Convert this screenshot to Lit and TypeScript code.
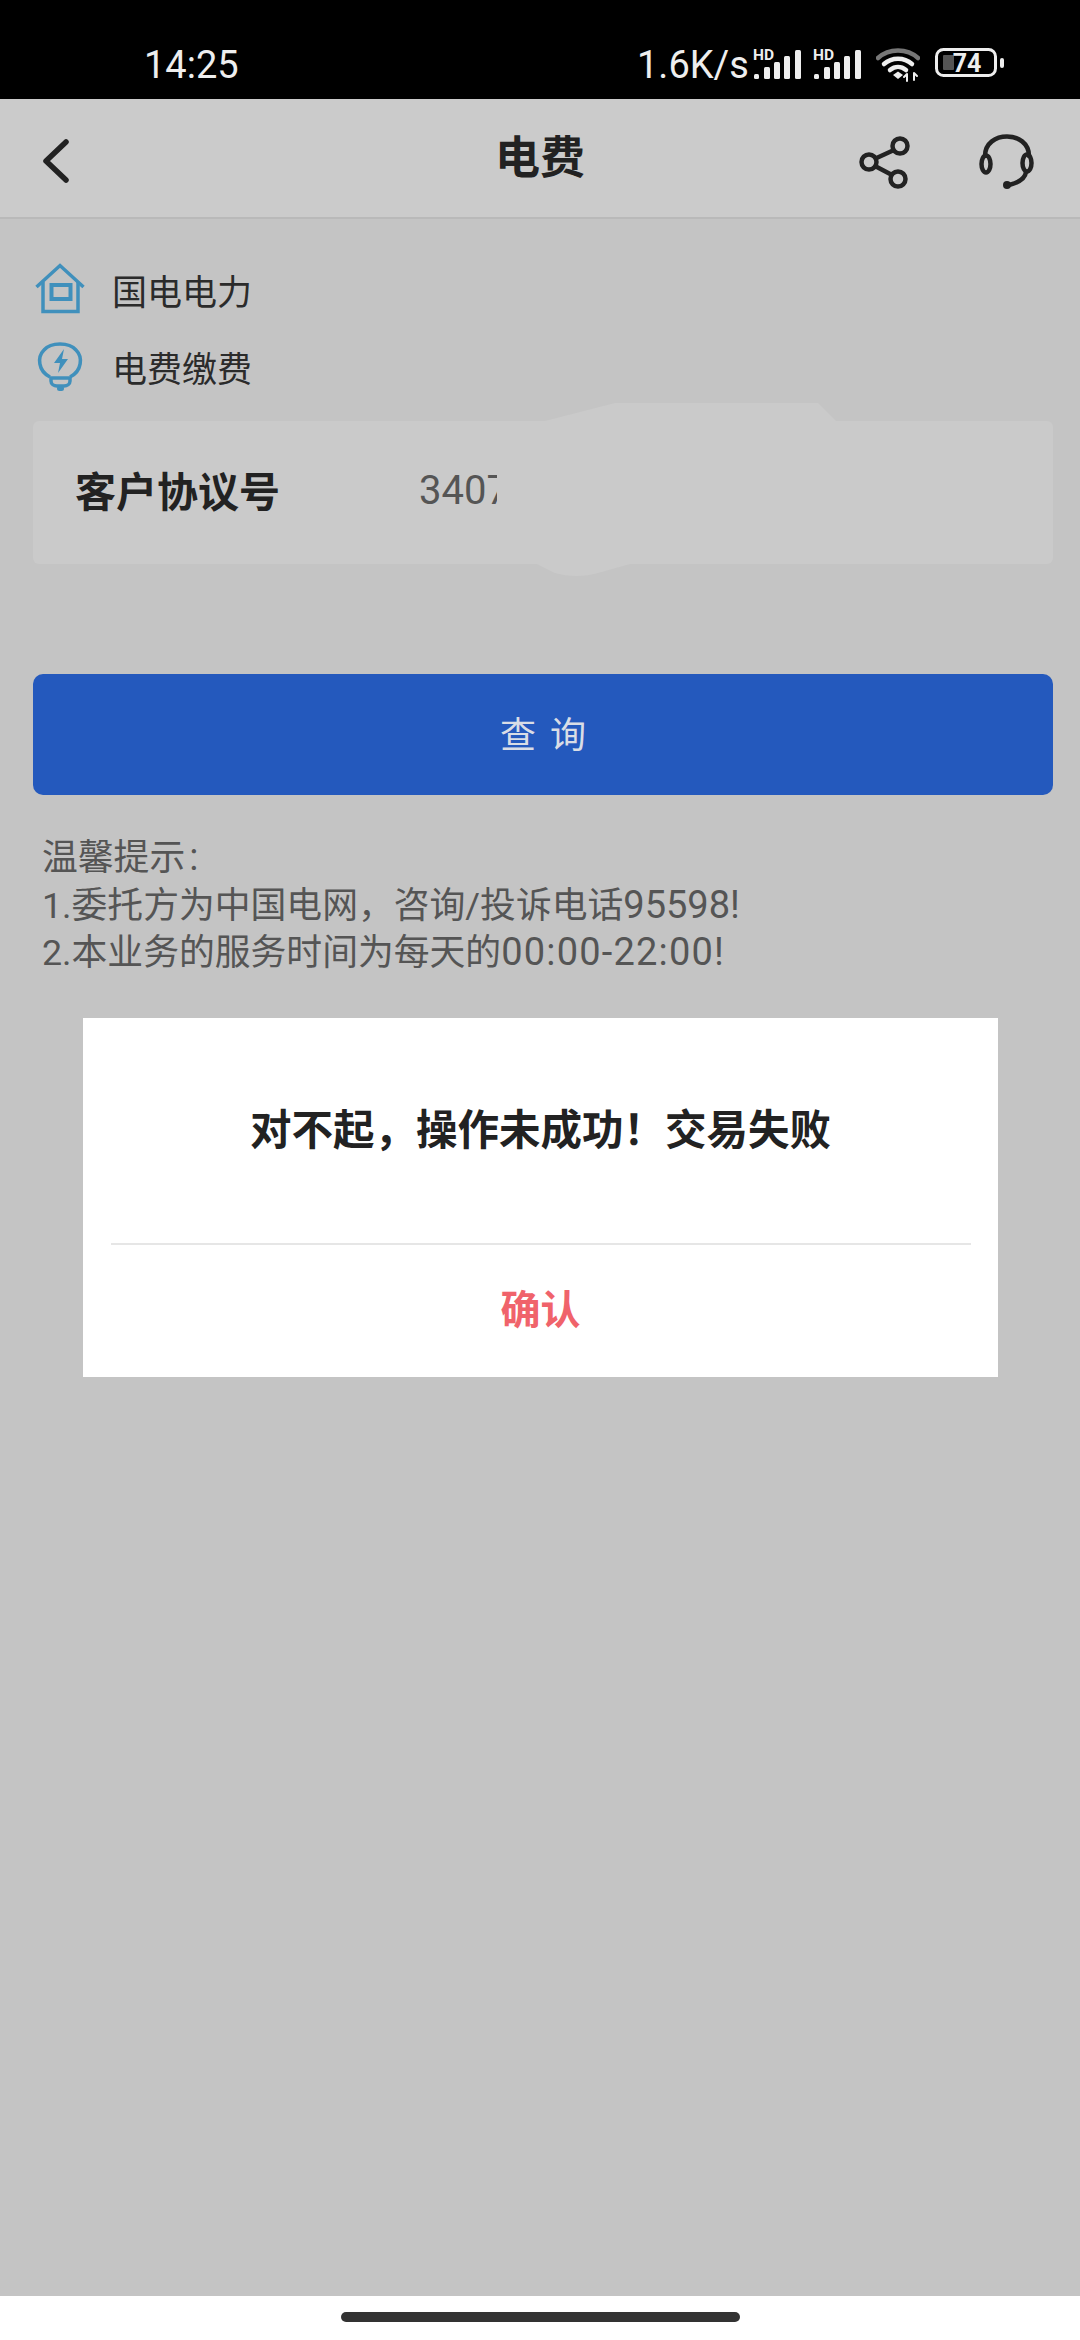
import { LitElement, html, css, svg } from "lit";
import { customElement } from "lit/decorators.js";

const signal = svg`<svg class="sig" width="50" height="36" viewBox="0 0 50 36">
  <text x="0" y="14" class="hd">HD</text>
  <rect x="1" y="28" width="5" height="5" rx="1.5" fill="#eee"/>
  <rect x="11" y="21" width="6" height="12" rx="1.5" fill="#eee"/>
  <rect x="21" y="16" width="6" height="17" rx="1.5" fill="#eee"/>
  <rect x="31" y="10" width="6" height="23" rx="1.5" fill="#eee"/>
  <rect x="42" y="4" width="6" height="29" rx="1.5" fill="#eee"/>
</svg>`;

@customElement("app-root")
export class AppRoot extends LitElement {
  static styles = css`
    :host {
      display: flex;
      flex-direction: column;
      width: 1080px;
      height: 2340px;
      position: relative;
      overflow: hidden;
      background: #c4c4c4;
      font-family: Roboto, "Noto Sans CJK SC", "Noto Sans", sans-serif;
      color: #222;
    }
    .status {
      height: 99px;
      flex: none;
      box-sizing: border-box;
      background: #000;
      color: #eee;
      display: flex;
      justify-content: space-between;
      align-items: flex-start;
      padding: 43px 76px 0 144px;
      font-size: 38px;
      line-height: 44px;
    }
    .status-right {
      display: flex;
      align-items: flex-start;
    }
    .speed { width: 116px; }
    .sig { display: block; margin: 3px 10px 0 0; }
    .hd { font: 700 15.500px Roboto, sans-serif; fill: #eee; }
    .wifi { display: block; margin: 4px 15px 0 3px; }
    .batt { display: block; margin: 5px 0 0; }
    .batt-text { font: 700 25px Roboto, sans-serif; fill: #eee; }
    .appbar {
      height: 120px;
      flex: none;
      box-sizing: border-box;
      background: #cbcbcb;
      border-bottom: 2px solid #b9b9b9;
      display: grid;
      grid-template-columns: 1fr auto 1fr;
      align-items: center;
      padding: 5px 40px 0;
    }
    .title {
      font-size: 45px;
      font-weight: 700;
      line-height: 60px;
      color: #222;
      margin-top: -4px;
    }
    .actions {
      display: flex;
      justify-content: flex-end;
      gap: 68px;
      align-items: center;
      padding-right: 5px;
    }
    .actions svg { display: block; margin-top: 3px; }
    .body {
      flex: 1;
      box-sizing: border-box;
      padding: 32px 27px 0 33px;
    }
    .row {
      height: 77px;
      display: flex;
      align-items: center;
      gap: 23px;
      font-size: 35px;
      color: #2b2b2b;
    }
    .row svg { display: block; flex: none; }
    .card {
      position: relative;
      margin-top: 16px;
      height: 143px;
      background: #cacaca;
      border-radius: 6px;
      display: flex;
      align-items: center;
      padding: 0 0 8px 42px;
      box-sizing: border-box;
    }
    .card-label {
      width: 344px;
      font-size: 41px;
      font-weight: 700;
      color: #222;
      flex: none;
    }
    .card-value {
      white-space: nowrap;
      font-size: 40px;
      color: #555;
      margin-top: 4px;
    }
    .blob {
      position: absolute;
      left: 0;
      top: -18px;
      display: block;
    }
    .btn {
      margin-top: 110px;
      height: 121px;
      background: #2459bd;
      border-radius: 10px;
      color: #d9dde6;
      font-size: 36px;
      letter-spacing: 14px;
      display: flex;
      align-items: center;
      justify-content: center;
      padding: 0 0 6px 14px;
      box-sizing: border-box;
    }
    .hints {
      margin-top: 40px;
      padding-left: 9px;
      font-size: 35.800px;
      line-height: 47.500px;
      color: #555;
      white-space: nowrap;
    }
    .lat { font-size: 38px; line-height: 1; }
    .lat-wide { letter-spacing: 1.200px; }
    .colon { padding-left: 4px; }
    .dialog {
      position: absolute;
      left: 83px;
      top: 1018px;
      width: 915px;
      height: 359px;
      background: #fff;
      display: flex;
      flex-direction: column;
      align-items: center;
      box-sizing: border-box;
    }
    .msg {
      height: 227px;
      flex: none;
      width: 860px;
      box-sizing: border-box;
      border-bottom: 2px solid #e6e6e6;
      display: flex;
      align-items: center;
      justify-content: center;
      font-size: 41.500px;
      font-weight: 700;
      color: #222;
      padding-bottom: 8px;
    }
    .ok {
      flex: 1;
      display: flex;
      align-items: center;
      justify-content: center;
      font-size: 40px;
      font-weight: 700;
      color: #f0636b;
      padding-bottom: 9px;
    }
    .nav {
      height: 44px;
      flex: none;
      background: #fff;
      display: flex;
      align-items: center;
      justify-content: center;
    }
    .pill {
      width: 399px;
      height: 10px;
      border-radius: 5px;
      background: #333;
      margin-top: -2px;
    }
  `;

  render() {
    return html`
      <div class="status">
        <div>14:25</div>
        <div class="status-right">
          <div class="speed">1.6K/s</div>
          ${signal}${signal}
          <svg class="wifi" width="44" height="36" viewBox="0 0 44 36" fill="none" stroke-linecap="round">
            <path d="M2 11 C13 1 31 1 42 11" stroke="#777" stroke-width="4.500"/>
            <path d="M8 17 C16 10 28 10 36 17" stroke="#eee" stroke-width="4.500"/>
            <path d="M14 23 C19 19 25 19 30 23" stroke="#eee" stroke-width="4.500"/>
            <path d="M17 28 L22 24.500 L27 28 L22 32 Z" fill="#eee"/>
            <path d="M31 34 V27 M31 27 L28 30 M38 26 V33 M38 26 L41 29" stroke="#eee" stroke-width="2"/>
          </svg>
          <svg class="batt" width="69" height="34" viewBox="0 0 69 34">
            <rect x="1.500" y="1.500" width="59" height="26" rx="7" fill="none" stroke="#eee" stroke-width="3"/>
            <rect x="8" y="7" width="11" height="15" rx="1" fill="#555"/>
            <text x="32" y="24" text-anchor="middle" class="batt-text">74</text>
            <rect x="65" y="10" width="4" height="10" rx="2" fill="#eee"/>
          </svg>
        </div>
      </div>

      <div class="appbar">
        <svg width="32" height="48" viewBox="0 0 32 48" fill="none" stroke="#222" stroke-width="5.500" stroke-linecap="round" stroke-linejoin="round">
          <path d="M26 5 L6 24 L26 43"/>
        </svg>
        <div class="title">电费</div>
        <div class="actions">
          <svg width="54" height="56" viewBox="0 0 54 56" fill="none" stroke="#222" stroke-width="4.500">
            <circle cx="43" cy="12" r="7.500"/>
            <circle cx="12" cy="28" r="7.500"/>
            <circle cx="41" cy="45" r="7.500"/>
            <path d="M37 16 L18.500 24.500 M18 32 L35 41"/>
          </svg>
          <svg width="56" height="56" viewBox="0 0 56 56" fill="none" stroke="#222" stroke-width="4.500" stroke-linecap="round">
            <path d="M6 22 C6 -4 50 -4 50 22"/>
            <ellipse cx="7" cy="30" rx="4.500" ry="8.500"/>
            <ellipse cx="48" cy="29" rx="4.500" ry="8.500"/>
            <path d="M47 38 C46 46 38 49 30 51"/>
            <circle cx="28" cy="51" r="4" fill="#222" stroke="none"/>
          </svg>
        </div>
      </div>

      <div class="body">
        <div class="row">
          <svg width="56" height="54" viewBox="0 0 56 54" fill="none" stroke="#4090bc" stroke-width="3.500">
            <path d="M3.500 24 L27 2.500 L50.500 24"/>
            <path d="M10 19 V48.500 H45 V19"/>
            <rect x="18.500" y="22" width="19" height="14" stroke-width="4"/>
          </svg>
          <span>国电电力</span>
        </div>
        <div class="row">
          <svg width="56" height="54" viewBox="0 0 56 54" fill="none" stroke="#4090bc" stroke-width="3.500">
            <path d="M17 37 C5 31 4 17 11 10 C18 2 36 2 43 10 C50 17 49 31 37 37"/>
            <path d="M31 9 L21 23 H27 L25 33 L35 19 H29 Z" fill="#4090bc" stroke="none"/>
            <path d="M18 38 H37 V41 C37 44 34 46 31 46 H24 C21 46 18 44 18 41 Z"/>
            <rect x="24" y="46" width="7" height="5" rx="2.500" fill="#4090bc" stroke="none"/>
          </svg>
          <span>电费缴费</span>
        </div>

        <div class="card">
          <div class="card-label">客户协议号</div>
          <div class="card-value">3407</div>
          <svg class="blob" width="1020" height="175" viewBox="0 0 1020 175">
            <path d="M512 18 L582 0 H785 L803 18 V161 H597 L565 170 C552 174 535 174 522 170 L504 161 H464 V18 Z" fill="#cacaca"/>
          </svg>
        </div>

        <div class="btn">查询</div>

        <div class="hints">
          <div>温馨提示<span class="lat colon">:</span></div>
          <div>1.委托方为中国电网，咨询/投诉电话<span class="lat">95598!</span></div>
          <div>2.本业务的服务时间为每天的<span class="lat lat-wide">00:00-22:00!</span></div>
        </div>
      </div>

      <div class="dialog">
        <div class="msg">对不起，操作未成功！交易失败</div>
        <div class="ok">确认</div>
      </div>

      <div class="nav"><div class="pill"></div></div>
    `;
  }
}
